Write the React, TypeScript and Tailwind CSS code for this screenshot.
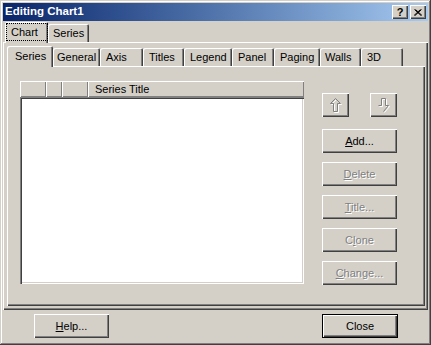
import React from "react";

const raised =
  "shadow-[inset_1px_1px_0_#ffffff,inset_-1px_-1px_0_#404040,inset_-2px_-2px_0_#808080]";

function Btn({
  children,
  disabled,
  isDefault,
  className = "",
}: {
  children: React.ReactNode;
  disabled?: boolean;
  isDefault?: boolean;
  className?: string;
}) {
  if (isDefault) {
    return (
      <div className={`h-[24px] border border-black bg-[#d4d0c8] ${className}`}>
        <div
          className={`flex h-full w-full items-center justify-center ${raised}`}
        >
          {children}
        </div>
      </div>
    );
  }
  return (
    <div
      className={`flex h-[24px] items-center justify-center bg-[#d4d0c8] ${raised} ${
        disabled ? "text-[#808080] [text-shadow:1px_1px_0_#ffffff]" : "text-black"
      } ${className}`}
    >
      {children}
    </div>
  );
}

function Tab({
  label,
  w,
  pl,
  selected,
  focus,
}: {
  label: string;
  w: number;
  pl: number;
  selected?: boolean;
  focus?: boolean;
}) {
  return (
    <div
      style={{ width: w, paddingLeft: pl }}
      className={`relative flex items-center rounded-t-[2px] bg-[#d4d0c8] shadow-[inset_1px_1px_0_#ffffff,inset_-1px_0_0_#404040,inset_-2px_0_0_#808080] ${
        selected ? "z-10 mb-[-1px] h-[21px] pb-[2px]" : "h-[18px]"
      }`}
    >
      {focus ? (
        <span className="border border-dotted border-black pl-[4px] pr-[9px] py-[1px] leading-[14px]">
          {label}
        </span>
      ) : (
        <span className="leading-[14px]">{label}</span>
      )}
    </div>
  );
}

function UpArrow() {
  return (
    <svg width="13" height="17" viewBox="0 0 13 17">
      <path
        d="M6.5 1.5 L11.5 6.5 L8.5 6.5 L8.5 14.5 L4.5 14.5 L4.5 6.5 L1.5 6.5 Z"
        fill="none"
        stroke="#ffffff"
        transform="translate(1 1)"
      />
      <path
        d="M6.5 1.5 L11.5 6.5 L8.5 6.5 L8.5 14.5 L4.5 14.5 L4.5 6.5 L1.5 6.5 Z"
        fill="none"
        stroke="#808080"
      />
    </svg>
  );
}

function DownArrow() {
  return (
    <svg width="13" height="17" viewBox="0 0 13 17">
      <path
        d="M4.5 1.5 L8.5 1.5 L8.5 8.5 L11.5 8.5 L6.5 14.5 M4.5 1.5 L4.5 8.5 L1.5 8.5"
        fill="none"
        stroke="#ffffff"
        transform="translate(1 1)"
      />
      <path
        d="M4.5 1.5 L8.5 1.5 L8.5 8.5 L11.5 8.5 L6.5 14.5 M4.5 1.5 L4.5 8.5 L1.5 8.5"
        fill="none"
        stroke="#808080"
      />
    </svg>
  );
}

export default function App() {
  const innerTabs: [string, number, number][] = [
    ["General", 47, 4],
    ["Axis", 43, 6],
    ["Titles", 41, 6],
    ["Legend", 48, 6],
    ["Panel", 42, 6],
    ["Paging", 46, 6],
    ["Walls", 41, 5],
    ["3D", 42, 6],
  ];

  return (
    <div className="flex h-[345px] w-[431px] flex-col bg-[#d4d0c8] p-[3px] font-['Liberation_Sans',Arial,sans-serif] text-[11px] text-black shadow-[inset_-1px_-1px_0_#404040,inset_1px_1px_0_#d4d0c8,inset_-2px_-2px_0_#808080,inset_2px_2px_0_#ffffff]">
      {/* title bar */}
      <div className="flex h-[18px] items-center bg-gradient-to-r from-[#0a246a] to-[#a6caf0] pl-[2px] pr-[2px]">
        <span className="flex-1 text-[11.5px] font-bold text-white">Editing Chart1</span>
        <div className="flex gap-[2px]">
          <div className={`flex h-[14px] w-[16px] items-center justify-center bg-[#d4d0c8] text-[11px] font-bold leading-none ${raised}`}>
            ?
          </div>
          <div className={`flex h-[14px] w-[16px] items-center justify-center bg-[#d4d0c8] ${raised}`}>
            <svg width="8" height="7" viewBox="0 0 8 7">
              <path d="M0.5 0.5 L7 6.5 M1.5 0.5 L8 6.5 M6.5 0.5 L0 6.5 M7.5 0.5 L1 6.5" stroke="#000" strokeWidth="1" />
            </svg>
          </div>
        </div>
      </div>

      {/* outer tabs */}
      <div className="flex h-[21px] items-end pl-[2px]">
        <Tab label="Chart" w={43} pl={1} selected focus />
        <Tab label="Series" w={41} pl={5} />
      </div>

      {/* outer page */}
      <div className="flex h-[268px] flex-col pb-[4px] pl-[4px] pr-[3px] pt-[4px] shadow-[inset_1px_1px_0_#ffffff,inset_-1px_-1px_0_#404040,inset_-2px_-2px_0_#808080]">
        <div className="flex h-[20px] items-end">
          <Tab label="Series" w={46} pl={8} selected />
          {innerTabs.map(([l, w, p]) => (
            <Tab key={l} label={l} w={w} pl={p} />
          ))}
        </div>
        <div className="flex flex-1 pl-[13px] pt-[15px] shadow-[inset_1px_1px_0_#ffffff,inset_-1px_-1px_0_#404040,inset_-2px_-2px_0_#808080]">
          {/* list */}
          <div className="flex w-[284px] flex-col">
            <div className="flex h-[16px]">
              <div className="w-[26px] shadow-[inset_1px_1px_0_#ffffff,inset_-1px_-1px_0_#808080]" />
              <div className="w-[16px] shadow-[inset_1px_1px_0_#ffffff,inset_-1px_-1px_0_#808080]" />
              <div className="w-[26px] shadow-[inset_1px_1px_0_#ffffff,inset_-1px_-1px_0_#808080]" />
              <div className="flex flex-1 items-center pl-[7px] shadow-[inset_1px_1px_0_#ffffff,inset_-1px_-1px_0_#808080]">
                Series Title
              </div>
            </div>
            <div className="h-[187px] bg-white shadow-[inset_1px_1px_0_#808080,inset_2px_2px_0_#404040,inset_-1px_-1px_0_#ffffff,inset_-2px_-2px_0_#d4d0c8]" />
          </div>

          {/* buttons */}
          <div className="ml-[18px] flex w-[75px] flex-col pt-[12px]">
            <div className="flex justify-between">
              <Btn disabled className="w-[27px]">
                <UpArrow />
              </Btn>
              <Btn disabled className="w-[27px]">
                <DownArrow />
              </Btn>
            </div>
            <div className="mt-[12px] flex flex-col gap-[9px]">
              <Btn>
                <span>
                  <u>A</u>dd...
                </span>
              </Btn>
              <Btn disabled>
                <span>
                  <u>D</u>elete
                </span>
              </Btn>
              <Btn disabled>
                <span>
                  <u>T</u>itle...
                </span>
              </Btn>
              <Btn disabled>
                <span>
                  C<u>l</u>one
                </span>
              </Btn>
              <Btn disabled>
                <span>
                  <u>C</u>hange...
                </span>
              </Btn>
            </div>
          </div>
        </div>
      </div>

      {/* bottom buttons */}
      <div className="mt-[4px] flex pl-[31px]">
        <Btn className="w-[75px]">
          <span>
            <u>H</u>elp...
          </span>
        </Btn>
        <Btn isDefault className="ml-[213px] w-[76px]">
          Close
        </Btn>
      </div>
    </div>
  );
}
